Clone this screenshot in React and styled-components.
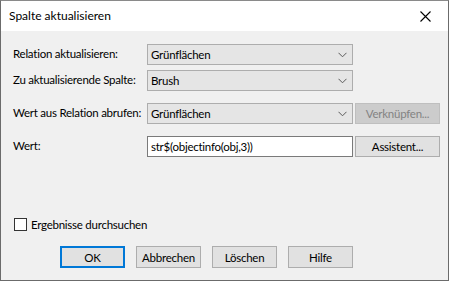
import styled, { createGlobalStyle } from "styled-components";

const GlobalStyle = createGlobalStyle`
    html, body {
        margin: 0;
        padding: 0;
        background: #ffffff;
    }
    body {
        font-family: Lato, "Liberation Sans", sans-serif;
        font-size: 11.5px;
        letter-spacing: -0.25px;
        color: #000000;
    }
`;

// dropdown chevron drawn like the Windows combo arrow
const Chevron = () => (
    <svg width="9" height="6" viewBox="0 0 9 6">
        <polyline points="0.5,0.8 4.5,4.8 8.5,0.8" fill="none" stroke="#5a5a5a" strokeWidth="1" />
    </svg>
);

const CloseIcon = () => (
    <svg width="11" height="11" viewBox="0 0 11 11">
        <path d="M0.5 0.5 L10.5 10.5 M10.5 0.5 L0.5 10.5" stroke="#000" strokeWidth="1.1" />
    </svg>
);

const ComboBox = ({ value }) => (
    <Combo>
        <ComboText>{value}</ComboText>
        <Chevron />
    </Combo>
);

const App = () => {
    return (
        <>
            <GlobalStyle />
            <Window>
                <TitleBar>
                    <Title>Spalte aktualisieren</Title>
                    <CloseButton>
                        <CloseIcon />
                    </CloseButton>
                </TitleBar>
                <Body>
                    <FormGrid>
                        <Label>Relation aktualisieren:</Label>
                        <ComboBox value="Grünflächen" />
                        <span />

                        <Label>Zu aktualisierende Spalte:</Label>
                        <ComboBox value="Brush" />
                        <span />

                        <Label $gapTop>Wert aus Relation abrufen:</Label>
                        <Spaced>
                            <ComboBox value="Grünflächen" />
                        </Spaced>
                        <Spaced>
                            <SideButton disabled>Verknüpfen...</SideButton>
                        </Spaced>

                        <Label $gapTop>Wert:</Label>
                        <Spaced>
                            <TextInput>str$(objectinfo(obj,3))</TextInput>
                        </Spaced>
                        <Spaced>
                            <SideButton>Assistent...</SideButton>
                        </Spaced>
                    </FormGrid>

                    <CheckRow>
                        <CheckBox />
                        <span>Ergebnisse durchsuchen</span>
                    </CheckRow>

                    <ButtonRow>
                        <Button $primary>OK</Button>
                        <Button>Abbrechen</Button>
                        <Button>Löschen</Button>
                        <Button>Hilfe</Button>
                    </ButtonRow>
                </Body>
            </Window>
        </>
    );
};

export default App;


const Window = styled.div`
    width: 449px;
    height: 281px;
    box-sizing: border-box;
    border: 1px solid #6b6b6b;
    border-top-color: #8a8a8a;
    display: flex;
    flex-direction: column;
    background: #f0f0f0;
`;

const TitleBar = styled.div`
    height: 30px;
    background: #ffffff;
    display: flex;
    align-items: center;
    justify-content: space-between;
    padding-left: 8px;
    flex-shrink: 0;
`;

const Title = styled.span`
    font-size: 12px;
    letter-spacing: 0;
    padding-bottom: 1px;
`;

const CloseButton = styled.div`
    width: 46px;
    height: 30px;
    display: flex;
    align-items: center;
    justify-content: center;
`;

const Body = styled.div`
    flex: 1;
    display: flex;
    flex-direction: column;
    padding: 13px 8px 12px 11px;
`;

const FormGrid = styled.div`
    display: grid;
    grid-template-columns: 135px 206px 87px;
    row-gap: 5px;
    align-items: start;
`;

const Label = styled.div`
    height: 21px;
    line-height: 19px;
    padding-left: 1px;
    white-space: nowrap;
    margin-top: ${(props) => (props.$gapTop ? "7px" : "0")};
`;

const Spaced = styled.div`
    margin-top: 7px;
`;

const Combo = styled.div`
    height: 21px;
    box-sizing: border-box;
    border: 1px solid #adadad;
    background: #e5e5e5;
    display: flex;
    align-items: center;
    justify-content: space-between;
    padding: 0 5px 0 3px;
`;

const ComboText = styled.span`
    line-height: 19px;
`;

const TextInput = styled.div`
    height: 21px;
    box-sizing: border-box;
    border: 1px solid #7a7a7a;
    background: #ffffff;
    padding: 0 3px;
    line-height: 19px;
`;

const SideButton = styled.div`
    height: 21px;
    margin-left: 2px;
    box-sizing: border-box;
    border: 1px solid ${(props) => (props.disabled ? "#bfbfbf" : "#adadad")};
    background: ${(props) => (props.disabled ? "#cccccc" : "#e1e1e1")};
    color: ${(props) => (props.disabled ? "#838383" : "#000000")};
    display: flex;
    align-items: center;
    justify-content: center;
`;

const CheckRow = styled.div`
    margin-top: auto;
    display: flex;
    align-items: center;
    gap: 4px;
    padding-left: 2px;
`;

const CheckBox = styled.div`
    width: 13px;
    height: 13px;
    box-sizing: border-box;
    border: 1px solid #333333;
    background: #ffffff;
`;

const ButtonRow = styled.div`
    display: flex;
    gap: 11px;
    margin-top: 15px;
    padding-left: 48px;
`;

const Button = styled.div`
    width: 65px;
    height: 22px;
    box-sizing: border-box;
    border: ${(props) => (props.$primary ? "2px solid #0078d7" : "1px solid #adadad")};
    background: #e1e1e1;
    display: flex;
    align-items: center;
    justify-content: center;
`;
